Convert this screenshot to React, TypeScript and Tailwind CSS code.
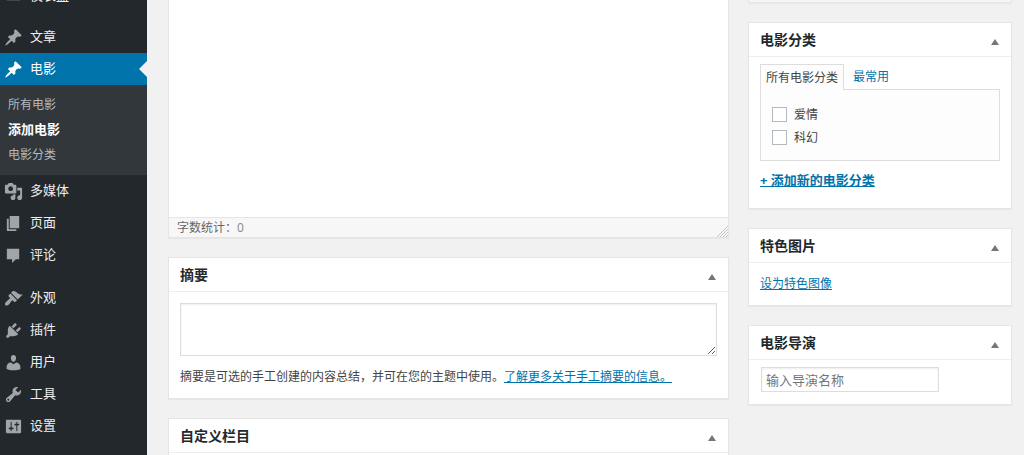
import React, { useState } from "react";

type MenuEntry = {
  label: string;
  icon: string;
  current?: boolean;
};

const PIN =
  "M10.44 3.02l1.82-1.82 6.36 6.35-1.83 1.82c-1.05-.68-2.48-.57-3.41.36l-.75.75c-.92.93-1.04 2.35-.35 3.41l-1.83 1.82-2.41-2.41-2.8 2.79c-.42.42-3.38 2.71-3.8 2.29s1.86-3.39 2.28-3.81l2.79-2.79L4.1 9.36l1.83-1.82c1.05.69 2.48.57 3.4-.36l.75-.75c.93-.92 1.05-2.35.36-3.41z";

const dashboardGroup: MenuEntry[] = [
  { label: "仪表盘", icon: "M3 14a7 7 0 1 1 14 0z" },
];

const contentGroup: MenuEntry[] = [
  { label: "文章", icon: PIN },
  { label: "电影", icon: PIN, current: true },
  {
    label: "多媒体",
    icon: "M13 11V4c0-.55-.45-1-1-1h-1.67L9 1H5L3.67 3H2c-.55 0-1 .45-1 1v7c0 .55.45 1 1 1h10c.55 0 1-.45 1-1zM7 4.5c1.38 0 2.5 1.12 2.5 2.5S8.38 9.5 7 9.5 4.5 8.38 4.5 7 5.62 4.5 7 4.5zM14 6h5v10.5c0 1.38-1.12 2.5-2.5 2.5S14 17.88 14 16.5s1.12-2.5 2.5-2.5c.17 0 .34.02.5.05V9h-3V6zm-4 8.05V13h2v3.5c0 1.38-1.12 2.5-2.5 2.5S7 17.88 7 16.5 8.12 14 9.5 14c.17 0 .34.02.5.05z",
  },
  { label: "页面", icon: "M6 15V2h10v13H6zm-1 1h8v2H3V5h2v11z" },
  { label: "评论", icon: "M3 3h13v11h-3.5L8.5 18v-4H3z" },
];

const siteGroup: MenuEntry[] = [
  {
    label: "外观",
    icon: "M14.48 11.06L7.41 3.99l1.5-1.5c.5-.56 2.3-.47 3.51.32 1.21.8 1.43 1.28 2.91 2.1 1.18.64 2.45 1.26 4.45.85zm-.71.71L6.7 4.7 4.93 6.47c-.39.39-.39 1.02 0 1.41l1.06 1.06c.39.39.39 1.03 0 1.42-.6.6-1.43 1.11-2.21 1.69-.35.26-.7.53-1.01.84C1.43 14.23.4 16.08 1.4 17.07c.99 1 2.84-.03 4.18-1.36.31-.31.58-.66.85-1.02.57-.78 1.08-1.61 1.69-2.21.39-.39 1.02-.39 1.41 0l1.06 1.06c.39.39 1.02.39 1.41 0z",
  },
  {
    label: "插件",
    icon: "M13.11 4.36L9.87 7.6 8 5.73l3.24-3.24c.35-.34 1.05-.2 1.56.32.52.51.66 1.21.31 1.55zm-8 1.77l.91-1.12 9.01 9.01-1.19.84c-.71.71-2.63 1.16-3.82 1.16H6.14L4.9 17.26c-.59.59-1.54.59-2.12 0-.59-.58-.59-1.53 0-2.12l1.24-1.24v-3.88c0-1.13.4-3.19 1.09-3.89zm7.26 3.97l3.24-3.24c.34-.35 1.04-.21 1.55.31.52.51.66 1.21.31 1.55l-3.24 3.25z",
  },
  {
    label: "用户",
    icon: "M10 9.25c-2.27 0-2.73-3.44-2.73-3.44C7 4.02 7.82 2 9.97 2c2.16 0 2.98 2.02 2.71 3.81 0 0-.41 3.44-2.68 3.44zm0 2.57L12.72 10c2.39 0 4.52 2.33 4.52 4.53v2.49s-3.65 1.13-7.24 1.13c-3.65 0-7.24-1.13-7.24-1.13v-2.49c0-2.25 1.94-4.48 4.47-4.48z",
  },
  {
    label: "工具",
    icon: "M16.68 9.77c-1.34 1.34-3.3 1.67-4.95.99l-5.41 6.52c-.99.99-2.59.99-3.58 0s-.99-2.59 0-3.57l6.52-5.42c-.68-1.65-.35-3.61.99-4.95 1.28-1.28 3.12-1.62 4.72-1.06l-2.89 2.89 2.82 2.82 2.86-2.87c.53 1.58.18 3.39-1.08 4.65zM3.81 16.21c.4.39 1.04.39 1.43 0 .4-.4.4-1.04 0-1.43-.39-.4-1.03-.4-1.43 0-.39.39-.39 1.03 0 1.43z",
  },
  {
    label: "设置",
    icon: "M18 16V4c0-.55-.45-1-1-1H3c-.55 0-1 .45-1 1v12c0 .55.45 1 1 1h14c.55 0 1-.45 1-1zM8 11h1c.55 0 1 .45 1 1s-.45 1-1 1H8v1.5c0 .28-.22.5-.5.5s-.5-.22-.5-.5V13H6c-.55 0-1-.45-1-1s.45-1 1-1h1V5.5c0-.28.22-.5.5-.5s.5.22.5.5V11zm5-2h-1c-.55 0-1-.45-1-1s.45-1 1-1h1V5.5c0-.28.22-.5.5-.5s.5.22.5.5V7h1c.55 0 1 .45 1 1s-.45 1-1 1h-1v5.5c0 .28-.22.5-.5.5s-.5-.22-.5-.5V9z",
  },
];

const MenuItem = ({ label, icon, current }: MenuEntry) => (
  <li>
    <a
      href="#"
      className={
        current
          ? "relative flex h-8 items-center gap-[7px] bg-[#0073aa] pl-1 text-[13px] text-white"
          : "flex h-8 items-center gap-[7px] pl-1 text-[13px] text-[#eeeeee]"
      }
    >
      <svg
        viewBox="0 0 20 20"
        className={current ? "size-[19px] fill-white" : "size-[19px] fill-[#a0a5aa]"}
        aria-hidden="true"
      >
        <path d={icon} />
      </svg>
      {label}
      {current && (
        <span className="absolute right-0 top-2 border-y-8 border-r-8 border-y-transparent border-r-[#f1f1f1]"></span>
      )}
    </a>
    {current && (
      <ul className="bg-[#32373c] pb-2 pl-2 pt-[7px] text-xs text-[#b4b9be]">
        <li className="flex h-[25px] items-center"><a href="#">所有电影</a></li>
        <li className="flex h-[25px] items-center text-[13px] font-bold text-white"><a href="#">添加电影</a></li>
        <li className="flex h-[25px] items-center"><a href="#">电影分类</a></li>
      </ul>
    )}
  </li>
);

const MenuGroup = ({ items }: { items: MenuEntry[] }) => (
  <ul>
    {items.map((item) => (
      <MenuItem key={item.label} {...item} />
    ))}
  </ul>
);

const Postbox = ({ title, children }: { title: string; children?: React.ReactNode }) => {
  const [open, setOpen] = useState(true);

  return (
    <section className="border border-[#e5e5e5] bg-white shadow-[0_1px_1px_rgba(0,0,0,0.04)]">
      <div className="flex h-[34px] items-center justify-between border-b border-[#eeeeee] pl-[11px] pr-3">
        <h2 className="text-sm font-bold text-[#23282d]">{title}</h2>
        <button type="button" aria-label={title} aria-expanded={open} className="pt-1" onClick={() => setOpen(!open)}>
          <svg viewBox="0 0 8 6" className="h-[6px] w-2 fill-[#72777c]" aria-hidden="true">
            <path d="M4 0l4 6H0z" />
          </svg>
        </button>
      </div>
      {open && children}
    </section>
  );
};

const AddMoviePage = () => {
  const [content, setContent] = useState("");
  const [excerpt, setExcerpt] = useState("");
  const [director, setDirector] = useState("");

  return (
    <div className="flex h-screen overflow-hidden bg-[#f1f1f1] font-['Open_Sans','Noto_Sans_CJK_SC',sans-serif] text-xs text-[#444444]">
      <nav className="-mt-5 w-[147px] shrink-0 bg-[#23282d]">
        <MenuGroup items={dashboardGroup} />
        <div className="h-[9px]"></div>
        <MenuGroup items={contentGroup} />
        <div className="h-[11px]"></div>
        <MenuGroup items={siteGroup} />
      </nav>

      <main className="flex min-w-0 flex-1 items-start gap-[19px] pl-[21px] pr-3">
        <div className="flex min-w-0 flex-1 flex-col gap-[19px]">
          {/* editor */}
          <div className="border-x border-b border-[#e5e5e5] bg-white shadow-[0_1px_1px_rgba(0,0,0,0.04)]">
            <textarea
              aria-label="内容"
              className="block h-[217px] w-full resize-none p-2 outline-none"
              value={content}
              onChange={(e) => setContent(e.target.value)}
            />
            <div className="flex h-5 items-center justify-between border-t border-[#e5e5e5] bg-[#f7f7f7] pl-2 text-[#666666]">
              <span>
                字数统计：<span className="text-[#888888]">{content.length}</span>
              </span>
              <svg viewBox="0 0 12 12" className="size-3 self-end stroke-[#c4c4c4]" aria-hidden="true">
                <path d="M1 12L12 1M4 12l8-8M7 12l5-5M10 12l2-2" />
              </svg>
            </div>
          </div>

          <Postbox title="摘要">
            <div className="px-[11px] py-[11px]">
              <textarea
                aria-label="摘要"
                className="block h-[53px] w-full resize-y border border-[#dddddd] p-1 shadow-[inset_0_1px_2px_rgba(0,0,0,0.07)] outline-none"
                value={excerpt}
                onChange={(e) => setExcerpt(e.target.value)}
              />
              <p className="mt-[11px] leading-5">
                摘要是可选的手工创建的内容总结，并可在您的主题中使用。
                <a href="#" className="text-[#0073aa] underline">了解更多关于手工摘要的信息。</a>
              </p>
            </div>
          </Postbox>

          <Postbox title="自定义栏目">
            <div className="h-20"></div>
          </Postbox>
        </div>

        <div className="flex w-[264px] shrink-0 flex-col gap-[19px]">
          <div className="h-[3px] border-x border-b border-[#e5e5e5] bg-[#f5f5f5] shadow-[0_1px_1px_rgba(0,0,0,0.04)]"></div>

          <Postbox title="电影分类">
            <div className="px-[11px] pb-[18px] pt-[7px]">
              <div className="flex">
                <a href="#" className="-mb-px flex h-[26px] items-center border border-b-0 border-[#dddddd] bg-[#fdfdfd] px-[5px]">
                  所有电影分类
                </a>
                <a href="#" className="flex h-[25px] items-center px-[9px] text-[#0073aa]">最常用</a>
              </div>
              <div className="flex flex-col gap-2 border border-[#dddddd] bg-[#fdfdfd] px-[11px] pb-[15px] pt-[17px]">
                {["爱情", "科幻"].map((name) => (
                  <label key={name} className="flex h-[15px] items-center gap-[7px]">
                    <input
                      type="checkbox"
                      className="size-[15px] appearance-none border border-[#b4b9be] bg-white checked:bg-[#0073aa]"
                    />
                    {name}
                  </label>
                ))}
              </div>
              <div className="mt-[9px] text-[13px] leading-5">
                <a href="#" className="font-bold text-[#0073aa] underline">+ 添加新的电影分类</a>
              </div>
            </div>
          </Postbox>

          <Postbox title="特色图片">
            <div className="px-[11px] py-[11px] leading-5">
              <a href="#" className="text-[#0073aa] underline">设为特色图像</a>
            </div>
          </Postbox>

          <Postbox title="电影导演">
            <div className="px-3 pb-3 pt-[7px]">
              <input
                type="text"
                aria-label="电影导演"
                placeholder="输入导演名称"
                className="block h-[25px] w-[178px] border border-[#dddddd] px-1 text-[13px] shadow-[inset_0_1px_2px_rgba(0,0,0,0.07)] outline-none placeholder:text-[#757575]"
                value={director}
                onChange={(e) => setDirector(e.target.value)}
              />
            </div>
          </Postbox>
        </div>
      </main>
    </div>
  );
};

export default AddMoviePage;
